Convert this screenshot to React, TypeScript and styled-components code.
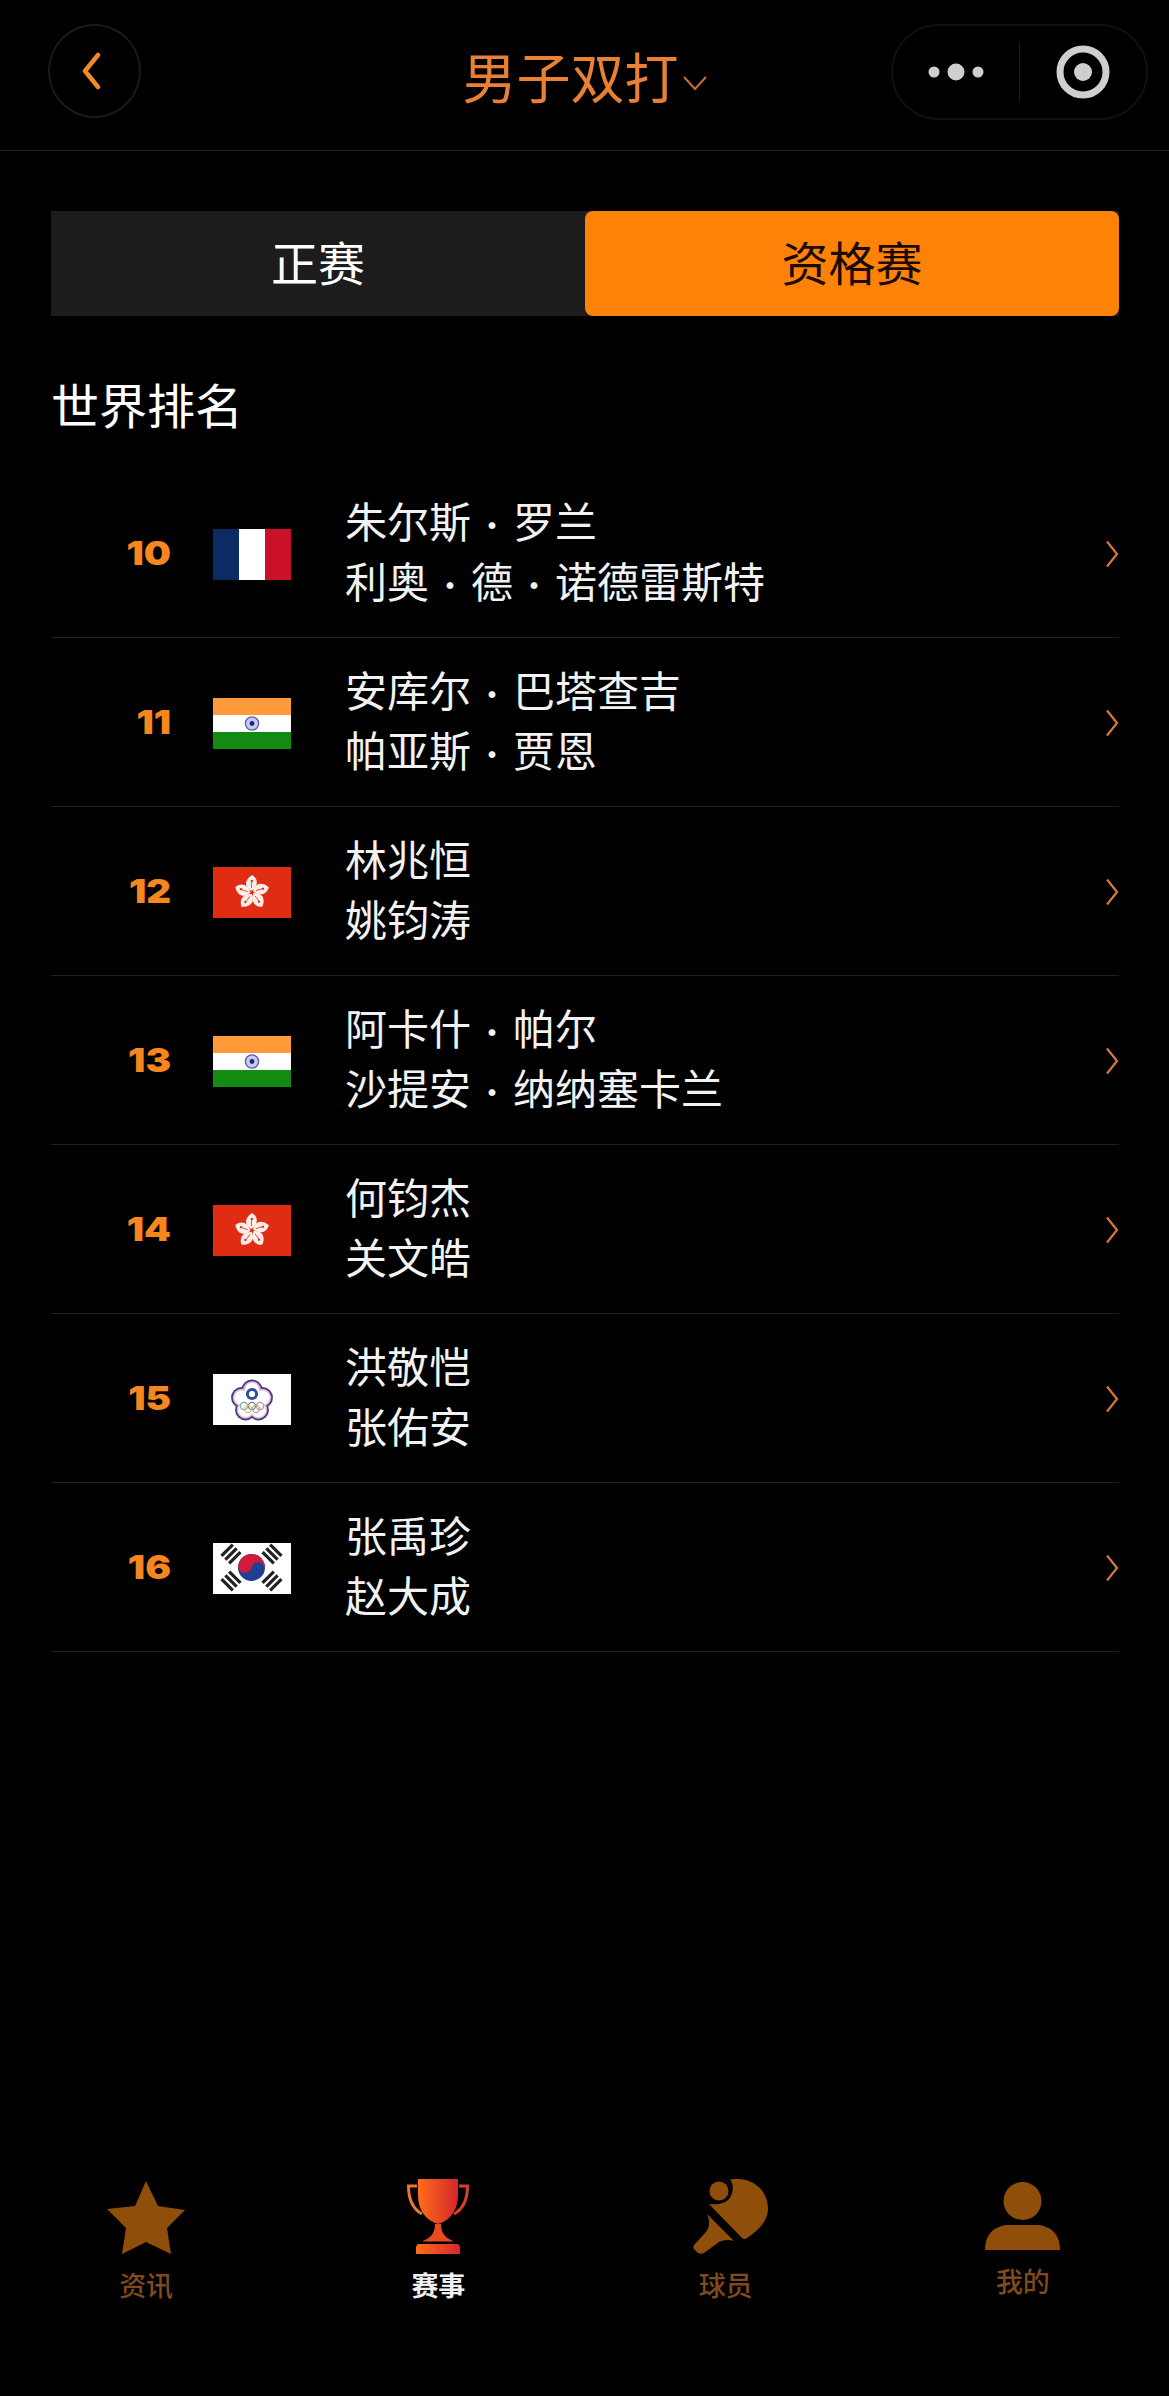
import React from "react";
import styled, { createGlobalStyle } from "styled-components";

const Global = createGlobalStyle`
  html, body { margin: 0; padding: 0; background: #000; }
  * { box-sizing: border-box; }
`;

const cjk = `"Noto Sans CJK SC", "Noto Sans", sans-serif`;

const Page = styled.div`
  width: 1169px; height: 2396px; background: #000; display: flex; flex-direction: column;
  font-family: ${cjk}; color: #fff; overflow: hidden;
`;
const Header = styled.header`
  height: 151px; flex: none; border-bottom: 1px solid #222; display: grid;
  grid-template-columns: 1fr auto 1fr; align-items: start; padding: 24px 21px 0 48px;
`;
const BackButton = styled.div`
  width: 93px; height: 94px; border-radius: 50%; border: 2px solid #191919;
  display: flex; align-items: center; justify-content: center;
`;
const Title = styled.div`
  display: flex; align-items: center; gap: 3px; font-size: 54px; line-height: 60px; margin: 22px 26px 0 0;
  color: #ea8034; font-weight: 400;
`;
const Capsule = styled.div`
  justify-self: end; width: 257px; height: 96px; border-radius: 48px; border: 2px solid #101010;
  display: flex; align-items: center;
`;
const CapsulePart = styled.div`
  flex: 1; height: 60px; display: flex; align-items: center; justify-content: center;
  & + & { border-left: 1px solid #1a1a1a; }
`;
const Main = styled.main`
  flex: 1; padding: 60px 50px 0 51px; display: flex; flex-direction: column;
`;
const Tabs = styled.div`
  display: grid; grid-template-columns: 1fr 1fr; height: 105px; background: #1c1c1c;
`;
const Tab = styled.div<{ $active?: boolean }>`
  display: flex; align-items: center; justify-content: center; font-size: 47px; border-radius: 8px;
  padding-bottom: 6px;
  background: ${(p) => (p.$active ? "#ff8208" : "transparent")};
  color: ${(p) => (p.$active ? "#1a0b00" : "#fff")};
`;
const SectionTitle = styled.h2`
  margin: 53px 0 0; font-size: 48px; line-height: 68px; font-weight: 400; height: 100px; color: #fff;
`;
const List = styled.div`display: flex; flex-direction: column;`;
const Row = styled.div`
  height: 169px; display: flex; align-items: center; border-bottom: 1px solid #1e1e1e;
`;
const Rank = styled.div`
  width: 120px; text-align: right; font-family: Inter, "Liberation Sans", sans-serif; font-weight: 900;
  font-size: 33px; color: #f7861f; transform: scaleX(1.16); transform-origin: right center;
`;
const FlagBox = styled.div`
  width: 78px; height: 51px; margin: 3px 0 0 42px; flex: none; display: flex;
  svg { display: block; }
`;
const Names = styled.div`
  margin-left: 54px; padding-bottom: 6px; font-size: 42px; line-height: 60px; color: #f2f2f2; flex: 1;
`;
const Dot = styled.span`
  display: inline-block; width: 42px; text-align: center; font-size: 32px; line-height: 1;
`;
const ChevronBox = styled.div`
  display: flex; margin-top: 2px;
  svg { display: block; }
`;
const TabBar = styled.nav`
  flex: none; height: 226px; display: grid; grid-template-columns: repeat(4, 1fr); padding-top: 8px;
`;
const TabItem = styled.div`
  display: flex; flex-direction: column; align-items: center;
`;
const IconBox = styled.div<{ $h: number }>`
  height: ${(p) => p.$h}px; display: flex; align-items: flex-end;
  svg { display: block; }
`;
const TabLabel = styled.div<{ $active?: boolean; $shift?: number }>`
  font-size: 27px; line-height: 36px; margin-top: 13px; font-weight: ${(p) => (p.$active ? 700 : 500)};
  color: ${(p) => (p.$active ? "#f0f0f0" : "#7f4a1c")};
  margin-right: ${(p) => p.$shift ?? 0}px;
`;

const France = () => (
  <svg width="78" height="51" viewBox="0 0 78 51">
    <rect width="26" height="51" fill="#0c2a63" />
    <rect x="26" width="26" height="51" fill="#fff" />
    <rect x="52" width="26" height="51" fill="#cb1127" />
  </svg>
);
const India = () => (
  <svg width="78" height="51" viewBox="0 0 78 51">
    <rect width="78" height="17" fill="#ff9a3a" />
    <rect y="17" width="78" height="17" fill="#fff" />
    <rect y="34" width="78" height="17" fill="#138a12" />
    <circle cx="39" cy="25.5" r="6.6" fill="#c9cbee" stroke="#5e62ae" strokeWidth="1.4" />
    <circle cx="39" cy="25.5" r="2.4" fill="#20237f" />
  </svg>
);
const HongKong = () => (
  <svg width="78" height="51" viewBox="0 0 78 51">
    <rect width="78" height="51" fill="#e12c14" />
    {[0, 72, 144, 216, 288].map((a) => (
      <g key={a} transform={`rotate(${a - 6} 39 25.5)`}>
        <path d="M38.5 24 C32 20 32 12 41 8 C47 13 46 20 38.5 24Z" fill="#fbeeea" />
        <path d="M39 21 C39 18 39.5 16 40 14" stroke="#e12c14" strokeWidth="0.8" fill="none" />
        <circle cx="40" cy="14" r="1.2" fill="#e12c14" />
      </g>
    ))}
  </svg>
);
const lobes = [0, 72, 144, 216, 288].map((a) => {
  const r = (a * Math.PI) / 180;
  return { x: 39 + 11 * Math.sin(r), y: 27 - 11 * Math.cos(r) };
});
const Taipei = () => (
  <svg width="78" height="51" viewBox="0 0 78 51">
    <rect width="78" height="51" fill="#fff" />
    {lobes.map((l, i) => <circle key={i} cx={l.x} cy={l.y} r="10.5" fill="#3d3f7c" />)}
    <circle cx="39" cy="27" r="12" fill="#3d3f7c" />
    {lobes.map((l, i) => <circle key={i} cx={l.x} cy={l.y} r="8.8" fill="#e9b8d6" />)}
    <circle cx="39" cy="27" r="12" fill="#e9b8d6" />
    {lobes.map((l, i) => <circle key={i} cx={l.x} cy={l.y} r="7.2" fill="#fff" />)}
    <circle cx="39" cy="27" r="12" fill="#fff" />
    <circle cx="39" cy="20" r="4.6" fill="#fff" stroke="#2f4f9a" strokeWidth="3" />
    <circle cx="31" cy="32" r="3.6" fill="none" stroke="#7f9fb8" strokeWidth="1.2" />
    <circle cx="39" cy="32" r="3.6" fill="none" stroke="#777" strokeWidth="1.2" />
    <circle cx="47" cy="32" r="3.6" fill="none" stroke="#c98a8a" strokeWidth="1.2" />
    <circle cx="35" cy="35" r="3.6" fill="none" stroke="#dcc878" strokeWidth="1.2" />
    <circle cx="43" cy="35" r="3.6" fill="none" stroke="#8fb88f" strokeWidth="1.2" />
  </svg>
);
const Trigram = ({ x, y, r }: { x: number; y: number; r: number }) => (
  <g transform={`translate(${x} ${y}) rotate(${r})`} fill="#222">
    <rect x="-8" y="-7" width="16" height="3.2" />
    <rect x="-8" y="-1.6" width="16" height="3.2" />
    <rect x="-8" y="3.8" width="16" height="3.2" />
  </g>
);
const Korea = () => (
  <svg width="78" height="51" viewBox="0 0 78 51">
    <rect width="78" height="51" fill="#fff" />
    <circle cx="38.5" cy="24.5" r="13.5" fill="#1d3f94" />
    <path
      d="M25 24.5 A13.5 13.5 0 0 1 52 24.5 A6.75 6.75 0 0 0 38.5 24.5 A6.75 6.75 0 0 1 25 24.5Z"
      fill="#d01c3a" transform="rotate(12 38.5 24.5)"
    />
    <Trigram x={18} y={11} r={-45} />
    <Trigram x={59} y={11} r={45} />
    <Trigram x={18} y={38} r={45} />
    <Trigram x={59} y={38} r={-45} />
  </svg>
);

const Chevron = () => (
  <ChevronBox>
    <svg width="14" height="28" viewBox="0 0 14 28" fill="none" stroke="#d9773a" strokeWidth="2.2">
      <path d="M2 1.5 L12 14 L2 26.5" />
    </svg>
  </ChevronBox>
);

const Name = ({ text }: { text: string }) => (
  <div>
    {text.split("・").map((part, i) => (
      <React.Fragment key={i}>
        {i > 0 && <Dot>·</Dot>}
        {part}
      </React.Fragment>
    ))}
  </div>
);

const players = [
  { rank: 10, flag: <France />, a: "朱尔斯・罗兰", b: "利奥・德・诺德雷斯特" },
  { rank: 11, flag: <India />, a: "安库尔・巴塔查吉", b: "帕亚斯・贾恩" },
  { rank: 12, flag: <HongKong />, a: "林兆恒", b: "姚钧涛" },
  { rank: 13, flag: <India />, a: "阿卡什・帕尔", b: "沙提安・纳纳塞卡兰" },
  { rank: 14, flag: <HongKong />, a: "何钧杰", b: "关文皓" },
  { rank: 15, flag: <Taipei />, a: "洪敬恺", b: "张佑安" },
  { rank: 16, flag: <Korea />, a: "张禹珍", b: "赵大成" },
];

const brown = "#8f4e0a";

export default function App() {
  return (
    <Page>
      <Global />
      <Header>
        <BackButton>
          <svg width="24" height="38" viewBox="0 0 24 38" fill="none" stroke="#f08a24" strokeWidth="4.5" strokeLinecap="round" strokeLinejoin="round" style={{ marginRight: 6, marginTop: -1 }}>
            <path d="M18 3 L5 19 L18 35" />
          </svg>
        </BackButton>
        <Title>
          男子双打
          <svg width="26" height="16" viewBox="0 0 26 16" fill="none" stroke="#c86e2e" strokeWidth="2" style={{ marginTop: 14 }}>
            <path d="M2 2 L13 14 L24 2" />
          </svg>
        </Title>
        <Capsule>
          <CapsulePart>
            <svg width="58" height="20" viewBox="0 0 58 20" fill="#cfcfcf">
              <circle cx="7" cy="10" r="5.5" />
              <circle cx="29" cy="10" r="8.5" />
              <circle cx="51" cy="10" r="5.5" />
            </svg>
          </CapsulePart>
          <CapsulePart>
            <svg width="54" height="54" viewBox="0 0 54 54">
              <circle cx="27" cy="27" r="23" fill="none" stroke="#cfcfcf" strokeWidth="7" />
              <circle cx="27" cy="27" r="9" fill="#cfcfcf" />
            </svg>
          </CapsulePart>
        </Capsule>
      </Header>
      <Main>
        <Tabs>
          <Tab>正赛</Tab>
          <Tab $active>资格赛</Tab>
        </Tabs>
        <SectionTitle>世界排名</SectionTitle>
        <List>
          {players.map((p) => (
            <Row key={p.rank}>
              <Rank>{p.rank}</Rank>
              <FlagBox>{p.flag}</FlagBox>
              <Names>
                <Name text={p.a} />
                <Name text={p.b} />
              </Names>
              <Chevron />
            </Row>
          ))}
        </List>
      </Main>
      <TabBar>
        <TabItem>
          <IconBox $h={76}>
            <svg width="78" height="73" viewBox="0 0 78 73" fill={brown}>
              <path d="M39 0 L51 25 L78 29 L60 47 L64 73 L39 61 L15 73 L19 47 L0 28 L28 25Z" />
            </svg>
          </IconBox>
          <TabLabel>资讯</TabLabel>
        </TabItem>
        <TabItem>
          <IconBox $h={76}>
            <svg width="62" height="75" viewBox="0 0 62 75">
              <defs>
                <linearGradient id="cup" x1="0" x2="1" y1="0" y2="0">
                  <stop offset="0" stopColor="#ff6d1a" />
                  <stop offset="1" stopColor="#d6262c" />
                </linearGradient>
              </defs>
              <path d="M11 0 H51 V16 C51 32 42 42 31 45 C20 42 11 32 11 16Z" fill="url(#cup)" />
              <path d="M28 45 H34 C34 54 38 59 47 62.5 H15 C24 59 28 54 28 45Z" fill="#ea4a22" />
              <path d="M12 65 H50 C52 65 53 67 53 69 V75 H9 V69 C9 67 10 65 12 65Z" fill="url(#cup)" />
              <path d="M10 7 H1.5 C1.5 20 6 30 15 35" fill="none" stroke="#e8782c" strokeWidth="3" />
              <path d="M52 7 H60.5 C60.5 20 56 30 47 35" fill="none" stroke="#d8402c" strokeWidth="3" />
            </svg>
          </IconBox>
          <TabLabel $active>赛事</TabLabel>
        </TabItem>
        <TabItem>
          <IconBox $h={76}>
            <svg width="75" height="75" viewBox="0 0 75 75" fill={brown}>
              <path d="M37 0.5 C58 -3 75 10 75 30 C75 42 65 52 54 59 C52 61 50 60 48 58 L16 25 C24 26 34 25 38 17 C41 10 40 4 37 0.5Z" />
              <circle cx="26" cy="12" r="9.5" />
              <path d="M14 35 L41 62 C36 60 30 61 26 63 L11 74 C8 75 6 75 4 73 L1 70 C0 68 0 66 2 65 L13 53 C17 48 17 42 14 35Z" />
            </svg>
          </IconBox>
          <TabLabel $shift={10}>球员</TabLabel>
        </TabItem>
        <TabItem>
          <IconBox $h={72}>
            <svg width="75" height="68" viewBox="0 0 75 68" fill={brown}>
              <circle cx="37.5" cy="19" r="19" />
              <path d="M0 68 C0 50 12 43 24 43 H51 C63 43 75 50 75 68Z" />
            </svg>
          </IconBox>
          <TabLabel>我的</TabLabel>
        </TabItem>
      </TabBar>
    </Page>
  );
}
